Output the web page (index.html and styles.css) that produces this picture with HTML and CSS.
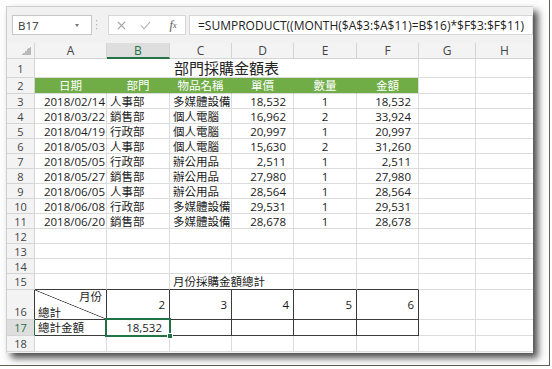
FILE: index.html
```html
<!DOCTYPE html>
<html lang="zh-Hant">
<head>
    <meta charset="UTF-8">
    <meta name="viewport" content="width=device-width, initial-scale=1.0">
    <title>部門採購金額表</title>
    <link rel="stylesheet" href="styles.css">
</head>
<body>

<div class="mat">
    <div class="shot">

        <!-- name box + formula bar -->
        <div class="fbar">
            <div class="namebox">B17<span class="caret"></span></div>
            <svg class="grip" width="3" height="12" viewBox="0 0 3 12">
                <rect x="1" y="1" width="1.2" height="1.2" fill="#b3b3b3"/>
                <rect x="1" y="5" width="1.2" height="1.2" fill="#b3b3b3"/>
                <rect x="1" y="9" width="1.2" height="1.2" fill="#b3b3b3"/>
            </svg>
            <div class="fbtns">
                <span class="btn">
                    <svg width="9" height="9" viewBox="0 0 9 9"><path d="M1 1L8 8M8 1L1 8" stroke="#a8a8a8" stroke-width="1.1" fill="none"/></svg>
                </span>
                <span class="btn">
                    <svg width="11" height="9" viewBox="0 0 11 9"><path d="M1 4.5L4 7.8L10 1" stroke="#a8a8a8" stroke-width="1.1" fill="none"/></svg>
                </span>
                <span class="btn fx">f<sub>x</sub></span>
            </div>
            <div class="formula">=SUMPRODUCT((MONTH($A$3:$A$11)=B$16)*$F$3:$F$11)</div>
        </div>

        <!-- worksheet -->
        <div class="sheet">
            <div class="row colhead">
                <div class="corner"><span class="tri"></span></div>
                <div>A</div><div class="on">B</div><div>C</div><div>D</div><div>E</div><div>F</div><div>G</div><div>H</div>
            </div>

            <div class="row title">
                <div class="rh">1</div>
                <div class="merged">部門採購金額表</div>
                <div></div><div></div>
            </div>

            <div class="row band">
                <div class="rh">2</div>
                <div class="g">日期</div><div class="g">部門</div><div class="g">物品名稱</div><div class="g">單價</div><div class="g">數量</div><div class="g last">金額</div>
                <div></div><div></div>
            </div>

            <div class="row">
                <div class="rh">3</div>
                <div class="r">2018/02/14</div><div>人事部</div><div>多媒體設備</div><div class="n">18,532</div><div class="c">1</div><div class="n">18,532</div>
                <div></div><div></div>
            </div>
            <div class="row">
                <div class="rh">4</div>
                <div class="r">2018/03/22</div><div>銷售部</div><div>個人電腦</div><div class="n">16,962</div><div class="c">2</div><div class="n">33,924</div>
                <div></div><div></div>
            </div>
            <div class="row">
                <div class="rh">5</div>
                <div class="r">2018/04/19</div><div>行政部</div><div>個人電腦</div><div class="n">20,997</div><div class="c">1</div><div class="n">20,997</div>
                <div></div><div></div>
            </div>
            <div class="row">
                <div class="rh">6</div>
                <div class="r">2018/05/03</div><div>人事部</div><div>個人電腦</div><div class="n">15,630</div><div class="c">2</div><div class="n">31,260</div>
                <div></div><div></div>
            </div>
            <div class="row">
                <div class="rh">7</div>
                <div class="r">2018/05/05</div><div>行政部</div><div>辦公用品</div><div class="n">2,511</div><div class="c">1</div><div class="n">2,511</div>
                <div></div><div></div>
            </div>
            <div class="row">
                <div class="rh">8</div>
                <div class="r">2018/05/27</div><div>銷售部</div><div>辦公用品</div><div class="n">27,980</div><div class="c">1</div><div class="n">27,980</div>
                <div></div><div></div>
            </div>
            <div class="row">
                <div class="rh">9</div>
                <div class="r">2018/06/05</div><div>人事部</div><div>辦公用品</div><div class="n">28,564</div><div class="c">1</div><div class="n">28,564</div>
                <div></div><div></div>
            </div>
            <div class="row">
                <div class="rh">10</div>
                <div class="r">2018/06/08</div><div>行政部</div><div>多媒體設備</div><div class="n">29,531</div><div class="c">1</div><div class="n">29,531</div>
                <div></div><div></div>
            </div>
            <div class="row">
                <div class="rh">11</div>
                <div class="r">2018/06/20</div><div>銷售部</div><div>多媒體設備</div><div class="n">28,678</div><div class="c">1</div><div class="n">28,678</div>
                <div></div><div></div>
            </div>

            <div class="row">
                <div class="rh">12</div>
                <div></div><div></div><div></div><div></div><div></div><div></div><div></div><div></div>
            </div>
            <div class="row">
                <div class="rh">13</div>
                <div></div><div></div><div></div><div></div><div></div><div></div><div></div><div></div>
            </div>
            <div class="row">
                <div class="rh">14</div>
                <div></div><div></div><div></div><div></div><div></div><div></div><div></div><div></div>
            </div>

            <!-- summary table -->
            <div class="row r15">
                <div class="rh">15</div>
                <div class="top"></div><div class="top"></div><div class="top span2">月份採購金額總計</div><div class="top"></div><div class="top"></div>
                <div></div><div></div>
            </div>
            <div class="row r16">
                <div class="rh dark">16</div>
                <div class="bx diag"><span class="up">月份</span><span>總計</span></div>
                <div class="bx r">2</div><div class="bx r">3</div><div class="bx r">4</div><div class="bx r">5</div><div class="bx r">6</div>
                <div></div><div></div>
            </div>
            <div class="row r17">
                <div class="rh on">17</div>
                <div class="bx">總計金額</div>
                <div class="bx n sel">18,532</div><div class="bx"></div><div class="bx"></div><div class="bx"></div><div class="bx"></div>
                <div></div><div></div>
            </div>
            <div class="row r18">
                <div class="rh">18</div>
                <div></div><div></div><div></div><div></div><div></div><div></div><div></div><div></div>
            </div>
        </div>

    </div>
</div>

</body>
</html>
```

FILE: styles.css
```css
/* page around the screenshot */
body {
    margin: 0;
    background: #ffffff;
    font-family: "Open Sans", "Noto Sans CJK TC", sans-serif;
    color: #1b1b1b;
}

/* white mat with the thin dark edge right/bottom */
.mat {
    box-sizing: border-box;
    width: 550px;
    height: 366px;
    padding: 6px 0 0 6px;
    background: #fdfdfd;
    border-right: 1px solid #5e6054;
    border-bottom: 1px solid #5e6054;
}

/* the screenshot itself, with its drop shadow */
.shot {
    box-sizing: border-box;
    width: 527px;
    height: 347px;
    overflow: hidden;
    background: #f1f1f1;
    border-top: 1px solid #cfcfcf;
    border-left: 1px solid #cfcfcf;
    box-shadow: 5px 5px 7px rgba(0, 0, 0, 0.7);
}

/* --- formula bar --- */
.fbar {
    display: flex;
    align-items: center;
    height: 36px;
    padding-left: 5px;
}

.namebox {
    box-sizing: border-box;
    display: flex;
    align-items: center;
    width: 80px;
    height: 20px;
    padding-left: 5px;
    background: #fff;
    border: 1px solid #c6c6c6;
    font-size: 11.5px;
    color: #333;
}

.caret {
    margin-left: auto;
    margin-right: 12px;
    border-left: 2.5px solid transparent;
    border-right: 2.5px solid transparent;
    border-top: 3px solid #777;
}

.grip {
    margin: 0 10px 0 3px;
}

.fbtns {
    box-sizing: border-box;
    display: flex;
    align-items: center;
    width: 78px;
    height: 20px;
    background: #fff;
    border: 1px solid #d6d6d6;
}

.btn {
    display: flex;
    justify-content: center;
    align-items: center;
    width: 24px;
}

.fx {
    margin-left: 4px;
    font-family: "Liberation Serif", serif;
    font-style: italic;
    font-size: 12px;
    color: #555;
}

.fx sub {
    font-size: 8px;
}

.formula {
    box-sizing: border-box;
    flex: 1;
    display: flex;
    align-items: center;
    height: 20px;
    margin-left: 3px;
    padding-left: 8px;
    background: #fff;
    border: 1px solid #d6d6d6;
    font-size: 12px;
    color: #222;
    white-space: nowrap;
}

/* --- worksheet grid --- */
.sheet {
    background: #fff;
}

.row {
    display: grid;
    grid-template-columns: 28px 72px 63px 62px 62px 63px 62px 57px 58px;
    height: 15px;
    font-size: 11.5px;
    line-height: 13px;
}

.row > div {
    box-sizing: border-box;
    display: flex;
    align-items: center;
    padding: 0 3px;
    border-right: 1px solid #dcdcdc;
    border-bottom: 1px solid #dcdcdc;
    white-space: nowrap;
    overflow: hidden;
}

/* row headers */
.row > .rh {
    justify-content: center;
    padding: 0;
    background: #f3f3f3;
    border-color: #d4d4d4;
    font-size: 11px;
    color: #444;
}

.row > .rh.on {
    background: #dedede;
    color: #217346;
    border-right-color: #217346;
}

.row > .rh.dark {
    border-right-color: #3a3a3a;
}

/* column headers */
.colhead {
    height: 16px;
}

.colhead > div {
    justify-content: center;
    background: #f3f3f3;
    border-color: #d4d4d4;
    font-size: 12px;
    color: #444;
}

.colhead > .on {
    background: #dedede;
    color: #217346;
    border-bottom: 2px solid #217346;
}

.colhead > .corner {
    justify-content: flex-end;
    align-items: flex-end;
    padding: 0 3px 3px 0;
}

.tri {
    width: 9px;
    height: 9px;
    background: linear-gradient(to bottom right, transparent 50%, #b9b9b9 50%);
}

/* title row */
.title {
    height: 19px;
}

.title > .merged {
    grid-column: 2 / 8;
    justify-content: center;
    font-size: 15px;
    line-height: 17px;
    color: #222;
}

/* green header band */
.band {
    height: 16px;
}

.row > .g {
    justify-content: center;
    background: #70ad47;
    border-right-color: #70ad47;
    color: #fff;
}

.row > .g.last {
    border-right-color: #dcdcdc;
}

/* alignment helpers */
.row > .r {
    justify-content: flex-end;
    padding-right: 1px;
}

.row > .c {
    justify-content: center;
}

.row > .n {
    justify-content: flex-end;
    padding-right: 7px;
}

/* summary table (rows 15-17) */
.r15,
.r17,
.r18 {
    height: 16px;
}

.r16 {
    height: 30px;
}

.row > .top {
    border-bottom-color: #3a3a3a;
}

.row > .span2 {
    grid-column: span 2;
}

.row > .bx {
    border-right-color: #3a3a3a;
    border-bottom-color: #3a3a3a;
}

.r16 > .rh {
    align-items: flex-end;
    padding-bottom: 1px;
}

.r16 > .r {
    padding-right: 4px;
}

.row > .diag {
    flex-direction: column;
    justify-content: space-between;
    align-items: flex-start;
    padding: 0 4px 0 3px;
    background: linear-gradient(to top right, transparent calc(50% - 0.7px), #3a3a3a 50%, transparent calc(50% + 0.7px));
}

.diag .up {
    align-self: flex-end;
}

/* selected cell B17 */
.row > .sel {
    position: relative;
    overflow: visible;
}

.sel::after {
    content: "";
    position: absolute;
    left: -2px;
    top: -2px;
    right: -2px;
    bottom: -2px;
    border: 2px solid #217346;
}

.sel::before {
    content: "";
    position: absolute;
    right: -4px;
    bottom: -4px;
    width: 4px;
    height: 4px;
    background: #217346;
    border: 1px solid #fff;
    z-index: 2;
}
```
